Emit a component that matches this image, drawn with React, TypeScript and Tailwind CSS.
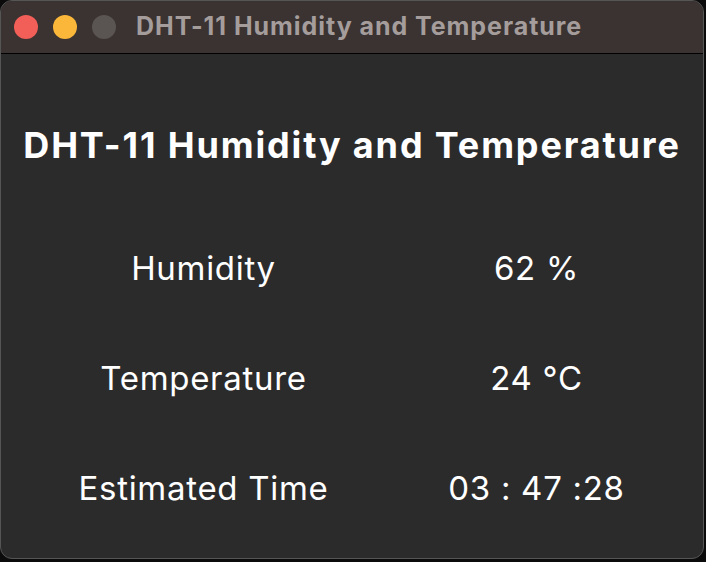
export default function App() {
  const rows = [
    { label: 'Humidity', value: '62 %' },
    { label: 'Temperature', value: '24 °C' },
    { label: 'Estimated Time', value: '03 : 47 :28' },
  ];

  return (
    <div className="w-[706px] h-[562px] bg-[#0b0b0b] overflow-hidden" style={{ fontFamily: 'Inter, "Noto Sans", sans-serif' }}>
      <div className="w-[704px] h-[559px] rounded-[12px] overflow-hidden border border-[#555] flex flex-col bg-[#2b2b2b]">
        {/* title bar */}
        <div className="h-[53px] shrink-0 bg-[#3a3331] border-b border-black flex items-center pl-[13px]">
          <div className="flex items-center gap-[15px]">
            <span className="w-6 h-6 rounded-full bg-[#f25f58]" />
            <span className="w-6 h-6 rounded-full bg-[#fbb73a]" />
            <span className="w-6 h-6 rounded-full bg-[#5a5452]" />
          </div>
          <span className="ml-[20px] text-[25px] font-bold text-[#a59d9c] tracking-[0.95px]">
            DHT-11 Humidity and Temperature
          </span>
        </div>

        {/* content */}
        <div className="flex-1 flex flex-col pt-[71px]">
          <h1 className="text-center text-[36px] leading-10 font-bold text-white tracking-[1.85px]">
            DHT-11 Humidity and Temperature
          </h1>
          <div className="mt-[79px] flex flex-col gap-[70px] pl-[36px]">
            {rows.map((r) => (
              <div key={r.label} className="grid grid-cols-2 h-10 items-center text-[33px] text-white tracking-[0.7px]">
                <span className="text-center">{r.label}</span>
                <span className="text-center">{r.value}</span>
              </div>
            ))}
          </div>
        </div>
      </div>
    </div>
  );
}
